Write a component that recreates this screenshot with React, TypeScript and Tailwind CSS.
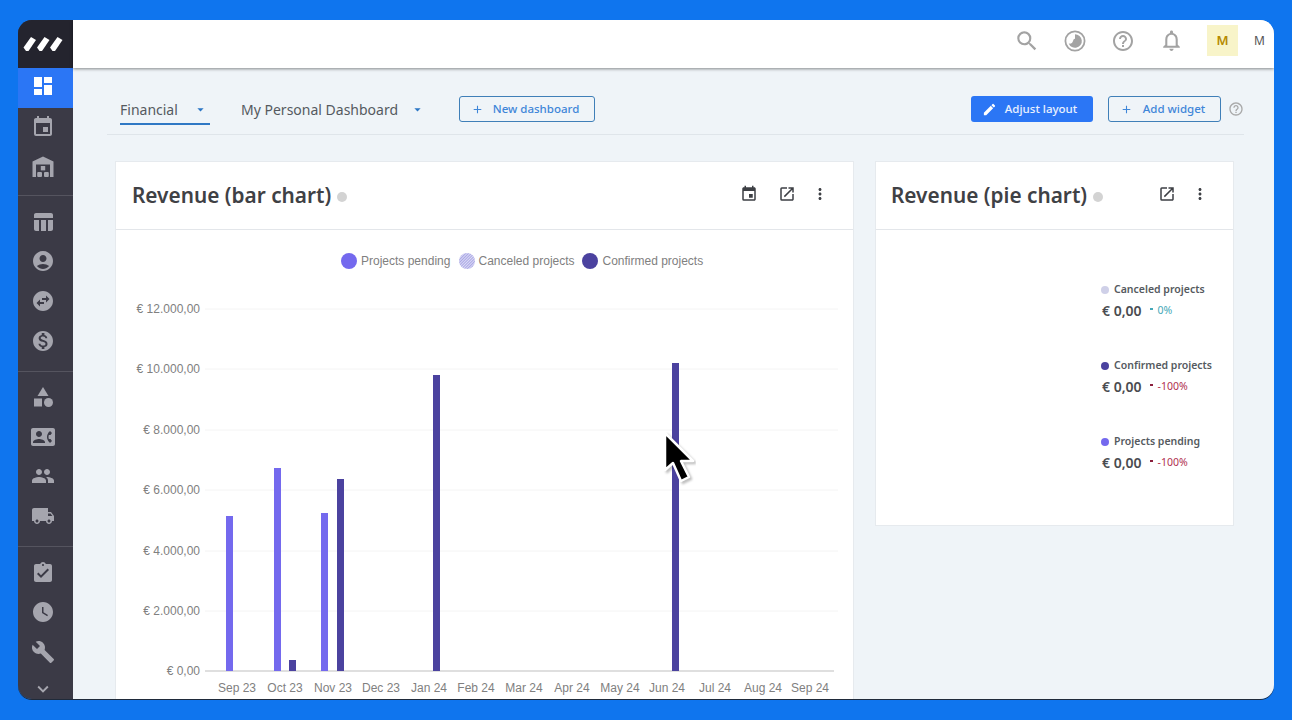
import React from "react";
import {
  MdDashboard, MdEvent, MdTableChart, MdAccountCircle, MdSwapHorizontalCircle,
  MdMonetizationOn, MdCategory, MdContactPhone, MdPeople, MdLocalShipping, MdAssignmentTurnedIn,
  MdWatchLater, MdBuild, MdExpandMore, MdSearch, MdHelpOutline, MdNotificationsNone,
  MdOpenInNew, MdMoreVert, MdEdit, MdAdd, MdArrowDropDown,
} from "react-icons/md";

type Ico = React.ComponentType<{ className?: string }>;

function WarehouseIcon({ className }: { className?: string }) {
  return (
    <svg viewBox="0 0 24 24" width="1em" height="1em" fill="currentColor" className={className}>
      <path d="M12 1.5 L22.5 6.5 V22 H19 V9.5 H5 V22 H1.5 V6.5 Z" />
      <rect x="9.8" y="11" width="4.4" height="4.4" />
      <rect x="6.2" y="17" width="4.8" height="5" rx="1" />
      <rect x="13" y="17" width="4.8" height="5" rx="1" />
    </svg>
  );
}

function Rail({ icon: I }: { icon: Ico }) {
  return (
    <div className="flex h-[39.7px] shrink-0 items-center justify-center pr-[5px]">
      <I className="text-[24px] text-[#a5a5ae]" />
    </div>
  );
}

function Sidebar() {
  return (
    <aside className="flex w-[55px] shrink-0 flex-col overflow-hidden bg-[#3b3a46]">
      <div className="flex h-[48px] shrink-0 items-center justify-center bg-[#24242e] pr-[5px]">
        <svg width="40" height="16" viewBox="0 0 40 16" className="fill-white">
          <polygon points="0.5,11.5 8,1 13,4 5.5,15 3,15" />
          <polygon points="14,11.5 21.5,1 26.5,4 19,15 16.5,15" />
          <polygon points="27,11.5 34.5,1 39.5,4 32,15 29.5,15" />
        </svg>
      </div>
      <div className="flex h-[40px] shrink-0 items-center justify-center bg-[#2b76f5] pb-[4px] pr-[5px]">
        <MdDashboard className="text-[24px] text-white" />
      </div>
      <div className="-mt-[1px] shrink-0">
        <Rail icon={MdEvent} />
        <Rail icon={WarehouseIcon} />
      </div>
      <div className="mt-[9px] shrink-0 border-t border-[#55545f] pt-[5.5px]">
        <Rail icon={MdTableChart} />
        <Rail icon={MdAccountCircle} />
        <Rail icon={MdSwapHorizontalCircle} />
        <Rail icon={MdMonetizationOn} />
      </div>
      <div className="mt-[10.5px] shrink-0 border-t border-[#55545f] pt-[5px]">
        <Rail icon={MdCategory} />
        <Rail icon={MdContactPhone} />
        <Rail icon={MdPeople} />
        <Rail icon={MdLocalShipping} />
      </div>
      <div className="mt-[10px] shrink-0 border-t border-[#55545f] pt-[6px]">
        <Rail icon={MdAssignmentTurnedIn} />
        <Rail icon={MdWatchLater} />
        <Rail icon={MdBuild} />
      </div>
      <div className="mt-[6px] flex shrink-0 justify-center pr-[5px]">
        <MdExpandMore className="text-[22px] text-[#a5a5ae]" />
      </div>
    </aside>
  );
}

function TopBar() {
  const box = "flex h-[48px] w-[48px] items-center justify-center text-[#a3a3a3]";
  return (
    <header className="relative z-10 flex h-[48px] shrink-0 items-center justify-end bg-white pb-[7px] shadow-[0_1px_3px_rgba(0,0,0,0.45)]">
      <div className={box}><MdSearch className="text-[26px]" /></div>
      <div className={box}>
        <svg width="22" height="22" viewBox="0 0 22 22" fill="none">
          <circle cx="11" cy="11" r="9.6" stroke="#a3a3a3" strokeWidth="1.8" />
          <path d="M11 4.2a6.8 6.8 0 1 1-6.3 9.3c2.4.6 3.6-.6 4.2-2.2.5-1.4.6-2.4 2.1-2.6z" fill="#a3a3a3" />
        </svg>
      </div>
      <div className={box}><MdHelpOutline className="text-[24px]" /></div>
      <div className={box}><MdNotificationsNone className="text-[25px]" /></div>
      <div className="ml-[12px] flex h-[31px] w-[31px] items-center justify-center bg-[#f8f4c9] text-[13px] font-semibold text-[#b58a00]">M</div>
      <span className="ml-[16px] w-[20px] text-[12px] text-[#555]">M</span>
    </header>
  );
}

function Tab({ label, className }: { label: string; className: string }) {
  return (
    <div className={`flex h-[30px] items-center justify-between pr-[2px] ${className}`}>
      <span className="whitespace-nowrap text-[14px] text-[#555a60]">{label}</span>
      <MdArrowDropDown className="text-[15px] text-[#2b76c5]" />
    </div>
  );
}

function TabsRow() {
  return (
    <div className="ml-[-1px] flex h-[67px] items-center border-b border-[#dfe5ea] pl-[13px] pt-[17px]">
      <div className="h-[30px] w-[90px] border-b-2 border-[#2f78c4]">
        <Tab label="Financial" className="w-[90px]" />
      </div>
      <Tab label="My Personal Dashboard" className="ml-[31px] w-[186px]" />
      <button className="mb-[1px] ml-[32px] flex h-[26px] w-[136px] items-center justify-center gap-[9px] rounded-[3px] border border-[#3f7fb8] pr-[4px] text-[11.5px] font-medium text-[#3f86d8]">
        <MdAdd className="text-[13px]" /> New dashboard
      </button>
      <button className="mb-[1px] ml-auto flex h-[26px] w-[122px] items-center justify-center gap-[8px] rounded-[3px] bg-[#2b76f5] pr-[5px] text-[11.5px] font-medium text-white/90">
        <MdEdit className="text-[15px] text-white" /> Adjust layout
      </button>
      <button className="mb-[1px] ml-[15px] flex h-[26px] w-[113px] items-center justify-center gap-[10px] rounded-[3px] border border-[#3f7fb8] pr-[4px] text-[11.5px] font-medium text-[#3f86d8]">
        <MdAdd className="text-[13px]" /> Add widget
      </button>
      <MdHelpOutline className="mb-[1px] ml-[7px] text-[16px] text-[#a9a9a9]" />
    </div>
  );
}

function CardHeader({ title, inset, children }: { title: string; inset: string; children: React.ReactNode }) {
  return (
    <div className={`flex h-[68px] shrink-0 items-center border-b border-[#e3e6ea] ${inset}`}>
      <h2 className="text-[20.8px] font-semibold text-[#3f4145]">{title}</h2>
      <span className="ml-[6px] mt-[2px] h-[10px] w-[10px] rounded-full bg-[#d3d3d3]" />
      <div className="ml-auto flex items-center pb-[3px] text-[#3d3f44]">{children}</div>
    </div>
  );
}

const labelsY = [["€ 12.000,00", 309], ["€ 10.000,00", 369], ["€ 8.000,00", 430], ["€ 6.000,00", 490], ["€ 4.000,00", 551], ["€ 2.000,00", 611], ["€ 0,00", 671]] as const;
const labelsX = [["Sep 23", 237], ["Oct 23", 285], ["Nov 23", 333], ["Dec 23", 381], ["Jan 24", 429], ["Feb 24", 476], ["Mar 24", 524], ["Apr 24", 572], ["May 24", 620], ["Jun 24", 667], ["Jul 24", 715], ["Aug 24", 763], ["Sep 24", 810]] as const;
const bars = [
  [226, 516, "#7469ee"], [274, 468, "#7469ee"], [289, 660, "#4b429f"], [321, 513, "#7469ee"],
  [337, 479, "#4b429f"], [433, 375, "#4b429f"], [672, 363, "#4b429f"],
] as const;

function BarChart() {
  return (
    <svg width="737" height="470" viewBox="116 230 737 470" className="block font-['Liberation_Sans',sans-serif]">
      <defs>
        <pattern id="hatch" width="2" height="2" patternUnits="userSpaceOnUse" patternTransform="rotate(45)">
          <rect width="2" height="2" fill="#dcdcf4" />
          <rect width="1" height="2" fill="#a9a6e6" />
        </pattern>
      </defs>
      <circle cx="349" cy="261" r="8" fill="#7469ee" />
      <text x="361" y="265" fontSize="12" fill="#808080">Projects pending</text>
      <circle cx="467" cy="261" r="8" fill="url(#hatch)" />
      <text x="478.5" y="265" fontSize="12" fill="#808080">Canceled projects</text>
      <circle cx="590" cy="261" r="8" fill="#4b429f" />
      <text x="602.5" y="265" fontSize="12" fill="#808080">Confirmed projects</text>
      {labelsY.map(([t, y], i) => (
        <g key={t}>
          <line x1="205" x2={i === 6 ? 834 : 838} y1={y} y2={y} stroke={i === 6 ? "#d4d4d4" : "#f4f4f4"} strokeWidth={i === 6 ? 1.5 : 1} />
          <text x="200" y={y + 4} textAnchor="end" fontSize="12" fill="#808080">{t}</text>
        </g>
      ))}
      {bars.map(([x, y, c]) => (
        <rect key={x} x={x} y={y} width="7" height={671 - y} fill={c} />
      ))}
      {labelsX.map(([t, x]) => (
        <text key={t} x={x} y="692" textAnchor="middle" fontSize="12" fill="#808080">{t}</text>
      ))}
    </svg>
  );
}

function Legend({ name, dot, pct, tone, mark }: { name: string; dot: string; pct: string; tone: string; mark: string }) {
  return (
    <div className="h-[76px]">
      <div className="flex h-[16px] items-center gap-[5px] whitespace-nowrap text-[10.5px] font-semibold text-[#555a60]">
        <span className={`h-[8px] w-[8px] rounded-full ${dot}`} />
        {name}
      </div>
      <div className="ml-[1px] mt-[2px] flex items-center">
        <span className="text-[14px] font-semibold text-[#4a4c50]">€ 0,00</span>
        <span className={`mb-[4px] ml-[8px] h-[2px] w-[3px] ${mark}`} />
        <span className={`ml-[5px] text-[10.5px] ${tone}`}>{pct}</span>
      </div>
    </div>
  );
}

function Cursor() {
  return (
    <svg width="36" height="56" viewBox="0 0 36 56" className="absolute left-[660px] top-[430px] z-20">
      <path d="M5 3 L5 40 L13 33 L21 51 L29 47 L21 31 L33 31 Z" fill="#000" stroke="#fff" strokeWidth="2.5" strokeLinejoin="round" style={{ filter: "drop-shadow(2px 2px 1px rgba(0,0,0,.25))" }} />
    </svg>
  );
}

export default function App() {
  return (
    <div className="relative h-[720px] w-[1292px] overflow-hidden bg-[#0f75ee] pb-[21px] pl-[18px] pr-[18px] pt-[20px] font-['Noto_Sans',sans-serif]">
      <div className="flex h-[679px] overflow-hidden rounded-[14px] shadow-[0_1px_0_#1f2a3a]">
        <Sidebar />
        <main className="flex min-w-0 flex-1 flex-col bg-[#eff4f8]">
          <TopBar />
          <div className="flex-1 overflow-hidden pl-[35px] pr-[30px]">
            <TabsRow />
            <div className="ml-[7px] mt-[26px] flex items-start gap-[21px]">
              <section className="flex w-[739px] shrink-0 flex-col border border-[#e6eaee] bg-white">
                <CardHeader title="Revenue (bar chart)" inset="pl-[16px]">
                  <MdEvent className="text-[18px]" />
                  <MdOpenInNew className="ml-[20px] text-[18px]" />
                  <MdMoreVert className="ml-[15px] mr-[24px] text-[18px]" />
                </CardHeader>
                <BarChart />
              </section>
              <section className="flex h-[365px] w-[359px] shrink-0 flex-col border border-[#e6eaee] bg-white">
                <CardHeader title="Revenue (pie chart)" inset="pl-[15px]">
                  <MdOpenInNew className="text-[18px]" />
                  <MdMoreVert className="ml-[15px] mr-[24px] text-[18px]" />
                </CardHeader>
                <div className="ml-[225px] pt-[52px]">
                  <Legend name="Canceled projects" dot="bg-[#cfd0e8]" pct="0%" tone="text-[#45a8b8]" mark="bg-[#45a8b8]" />
                  <Legend name="Confirmed projects" dot="bg-[#4b429f]" pct="-100%" tone="text-[#b0304f]" mark="bg-[#8a1f3c]" />
                  <Legend name="Projects pending" dot="bg-[#7469ee]" pct="-100%" tone="text-[#b0304f]" mark="bg-[#8a1f3c]" />
                </div>
              </section>
            </div>
          </div>
        </main>
      </div>
      <Cursor />
    </div>
  );
}
